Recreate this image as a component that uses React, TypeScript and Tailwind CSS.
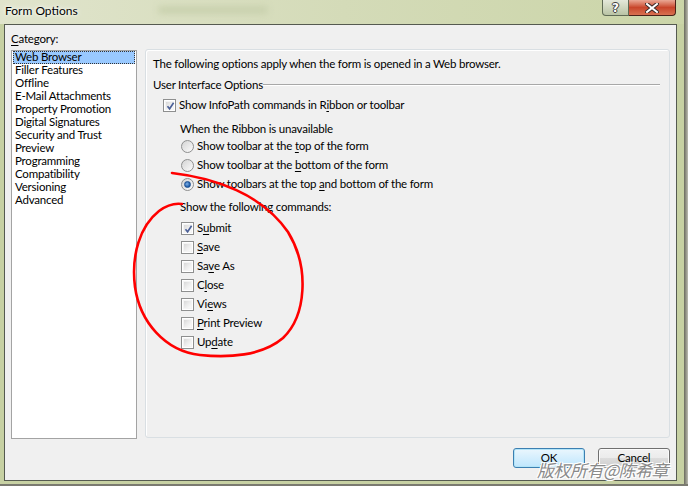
import React from 'react';

const categories = [
  'Web Browser',
  'Filler Features',
  'Offline',
  'E-Mail Attachments',
  'Property Promotion',
  'Digital Signatures',
  'Security and Trust',
  'Preview',
  'Programming',
  'Compatibility',
  'Versioning',
  'Advanced',
];

// label split around the accelerator letter: [before, key, after]
const commands: [string, string, string, boolean][] = [
  ['S', 'u', 'bmit', true],
  ['', 'S', 'ave', false],
  ['Sa', 'v', 'e As', false],
  ['C', 'l', 'ose', false],
  ['Vi', 'e', 'ws', false],
  ['', 'P', 'rint Preview', false],
  ['Up', 'd', 'ate', false],
];

function CheckBox({ checked }: { checked?: boolean }) {
  return (
    <div className="w-[13px] h-[13px] shrink-0 border border-[#8e8f8f] bg-white p-px">
      <div className="relative w-full h-full bg-gradient-to-br from-[#d8d8d8] via-[#ececec] to-[#fbfbfb] border border-[#f4f4f4]">
        {checked && (
          <svg viewBox="0 0 11 11" className="absolute -left-px -top-px w-[11px] h-[11px]">
            <path d="M2.5 5.2 L4.6 7.8 L8.6 1.8" fill="none" stroke="#4a5f97" strokeWidth="1.6" />
          </svg>
        )}
      </div>
    </div>
  );
}

function Radio({ checked }: { checked?: boolean }) {
  return (
    <div className="w-[13px] h-[13px] shrink-0 rounded-full border border-[#8e8f8f] bg-gradient-to-br from-[#d4d4d4] to-[#fcfcfc] flex items-center justify-center">
      {checked && (
        <div className="w-[7px] h-[7px] rounded-full bg-[radial-gradient(circle_at_40%_40%,#7fb0e6,#1c5aa6_70%)] border border-[#1b4f92]" />
      )}
    </div>
  );
}

function Acc({ a, k, b }: { a: string; k: string; b: string }) {
  return (
    <span>
      {a}
      <u className="underline-offset-[2px]">{k}</u>
      {b}
    </span>
  );
}

export default function App() {
  return (
    <div className="relative w-[688px] h-[486px] overflow-hidden bg-[#c7d1a3] font-['Lato',sans-serif] text-[11.5px] tracking-[-0.2px] leading-[16px] text-black">
      {/* title bar */}
      <div className="h-[24px] flex items-start bg-gradient-to-r from-[#e0e4cc] via-[#d4dbb8] to-[#cbd5a8]">
        <div className="pl-[5px] pt-[3px] text-[12px] tracking-normal [text-shadow:0_0_6px_#ffffff,0_0_3px_#ffffff]">Form Options</div>
        <div className="ml-[80px] mt-[6px] w-[110px] h-[8px] rounded-full bg-[#c9d1ae] blur-[3px]" />
        <div className="ml-auto mr-[12px] flex">
          <div className="w-[27px] h-[16px] rounded-bl-[4px] border border-t-0 border-[#5f6a55] bg-gradient-to-b from-[#e4e8da] via-[#cfd6bf] to-[#b9c3a5] flex items-center justify-center">
            <span className="font-['DejaVu_Sans',sans-serif] font-bold text-[12px] leading-[12px] text-white [text-shadow:0_0_1px_#333,1px_0_0_#444,-1px_0_0_#444,0_1px_0_#444,0_-1px_0_#444]">?</span>
          </div>
          <div className="w-[47px] h-[16px] rounded-br-[4px] border border-l-0 border-t-0 border-[#4b2219] bg-gradient-to-b from-[#e9a895] via-[#c8452b] to-[#d87050] flex items-center justify-center">
            <svg viewBox="0 0 14 10" className="w-[14px] h-[10px]">
              <path d="M2 1 L12 9 M12 1 L2 9" stroke="#3a2a28" strokeWidth="4" strokeLinecap="square" />
              <path d="M2 1 L12 9 M12 1 L2 9" stroke="#ffffff" strokeWidth="2" strokeLinecap="square" />
            </svg>
          </div>
        </div>
      </div>

      {/* client area */}
      <div className="ml-[4px] w-[673px] h-[457px] border border-[#555a50] bg-[#f0f0f0] pl-[6px] pt-[6px]">
        <div className="h-[15px] mb-[3px] leading-[15px]">
          <Acc a="" k="C" b="ategory:" />
        </div>

        <div className="flex items-start">
          {/* category list */}
          <div className="mt-px w-[126px] h-[389px] border border-[#a3a3a3] bg-white px-px">
            {categories.map((c, i) => (
              <div
                key={c}
                className={`h-[13px] leading-[12px] pl-[2px] ${
                  i === 0 ? 'bg-[#99c9ff] outline-1 outline-dotted outline-[#333] -outline-offset-1' : ''
                }`}
              >
                {c}
              </div>
            ))}
          </div>

          {/* options panel */}
          <div className="ml-[8px] w-[525px] h-[389px] rounded-[3px] border border-[#d9dfe3] shadow-[inset_1px_1px_0_#ffffff] bg-[#f0f0f0] pl-[7px] pt-[6px] pr-[9px]">
            <p>The following options apply when the form is opened in a Web browser.</p>

            <div className="mt-[5px] flex items-center">
              <span>User Interface Options</span>
              <div className="flex-1 h-px bg-[#a8a8a8] border-b border-white box-content" />
            </div>

            <div className="mt-[4px] ml-[10px] flex items-center gap-[3px]">
              <CheckBox checked />
              <Acc a="Show InfoPath commands in R" k="i" b="bbon or toolbar" />
            </div>

            <div className="mt-[8px] ml-[27px]">When the Ribbon is unavailable</div>
            <div className="mt-px ml-[28px] flex flex-col gap-[3px]">
              <div className="flex items-center gap-[3px]">
                <Radio />
                <Acc a="Show toolbar at the " k="t" b="op of the form" />
              </div>
              <div className="flex items-center gap-[3px]">
                <Radio />
                <Acc a="Show toolbar at the " k="b" b="ottom of the form" />
              </div>
              <div className="flex items-center gap-[3px]">
                <Radio checked />
                <Acc a="Show toolbars at the top " k="a" b="nd bottom of the form" />
              </div>
            </div>

            <div className="mt-[7px] ml-[27px]">Show the following commands:</div>
            <div className="mt-[5px] ml-[28px] flex flex-col gap-[3px]">
              {commands.map(([a, k, b, on]) => (
                <div key={a + k + b} className="flex items-center gap-[3px]">
                  <CheckBox checked={on} />
                  <Acc a={a} k={k} b={b} />
                </div>
              ))}
            </div>
          </div>
        </div>

        {/* buttons */}
        <div className="mt-[9px] flex justify-end gap-[13px] pr-[6px]">
          <button className="w-[72px] h-[20px] rounded-[3px] border border-[#3c7fb1] bg-gradient-to-b from-[#eaf6fd] to-[#bee6fd] shadow-[inset_0_0_0_1px_#b2e4f8] leading-[16px]">
            <Acc a="" k="O" b="K" />
          </button>
          <button className="w-[72px] h-[20px] rounded-[3px] border border-[#707070] bg-[linear-gradient(#f2f2f2,#ebebeb_50%,#dddddd_50%,#cfcfcf)] shadow-[inset_0_0_0_1px_#fbfbfb] leading-[16px]">
            Cancel
          </button>
        </div>
      </div>

      {/* window shadow */}
      <div className="absolute right-0 top-0 w-[4px] h-full bg-gradient-to-r from-[#6b6b5e] to-[#bdbdb2]" />
      <div className="absolute left-0 bottom-0 w-full h-[2px] bg-[#7a7a70]" />

      {/* red hand-drawn mark */}
      <svg className="absolute inset-0 pointer-events-none" width="688" height="486" viewBox="0 0 688 486">
        <path
          d="M172 173 C215 178 262 194 288 232 C310 268 306 316 283 338 C262 356 228 358 200 355 C165 351 140 322 135 287 C131 255 140 226 159 211 C167 205 175 203 182 204"
          fill="none"
          stroke="#ff0000"
          strokeWidth="2.6"
          strokeLinecap="round"
        />
      </svg>

      {/* watermark */}
      <div className="absolute left-[537px] top-[460px] italic text-[17px] leading-[20px] tracking-[-0.5px] text-[#8a8a8a] font-['Noto_Sans_CJK_SC',sans-serif] [text-shadow:1px_1px_0_#fff,-1px_-1px_0_#fff,1px_-1px_0_#fff,-1px_1px_0_#fff]">
        版权所有@陈希章
      </div>
    </div>
  );
}
